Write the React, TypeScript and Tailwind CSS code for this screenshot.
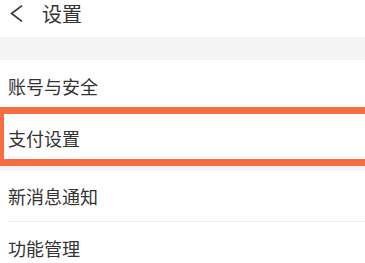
import React from 'react';

const items = [
  { id: 'account', label: '账号与安全' },
  { id: 'pay', label: '支付设置', active: true },
];

const Row = ({ label, active }: { label: string; active?: boolean }) => (
  <div className="relative flex h-[52px] items-center px-[8px] text-[18px] leading-[24px] text-[#333333]">
    <span>{label}</span>
    {active && (
      <div className="pointer-events-none absolute left-[-3px] right-[-12px] top-[-5px] bottom-[-2px] z-10 border-[7px] border-[#f86d42]" />
    )}
  </div>
);

export default function App() {
  return (
    <div
      className="h-[263px] w-[365px] overflow-hidden bg-white"
      style={{ fontFamily: '"Noto Sans CJK SC", "Noto Sans", sans-serif' }}
    >
      {/* header */}
      <div className="flex h-[37px] items-start gap-[19px] pl-[10px] pt-[2px]">
        <svg width="13" height="17" viewBox="0 0 13 17" className="mt-[3px]" fill="none">
          <path d="M12 0.7 L1.5 8.5 L12 16.3" stroke="#333333" strokeWidth="1.6" strokeLinejoin="miter" />
        </svg>
        <span className="text-[20px] leading-[24px] text-[#333333]">设置</span>
      </div>

      <div className="h-[23px] bg-[#f4f4f4]" />

      {items.map((it) => (
        <Row key={it.id} label={it.label} active={it.active} />
      ))}

      <div className="h-[7px] bg-[#f4f4f4]" />

      <div className="ml-[8px] flex h-[51px] items-center border-b border-[#efefef] text-[18px] leading-[24px] text-[#333333]">
        新消息通知
      </div>
      <Row label="功能管理" />
    </div>
  );
}
